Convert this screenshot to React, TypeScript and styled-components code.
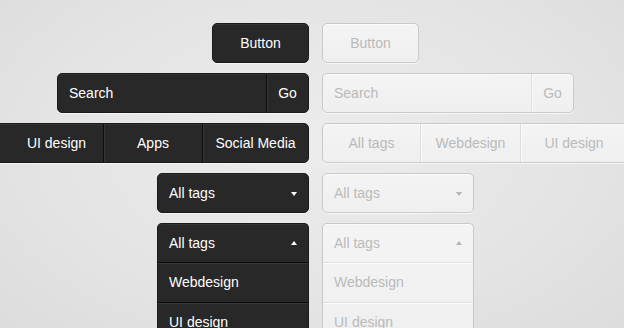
import React from "react";
import styled, { createGlobalStyle, css } from "styled-components";

type Tone = "dark" | "light";

const Global = createGlobalStyle`
  html, body { margin: 0; padding: 0; }
  body {
    width: 624px;
    height: 328px;
    overflow: hidden;
    background: radial-gradient(ellipse 70% 80% at 50% 45%, #ececec 0%, #e4e4e4 60%, #dcdcdc 100%);
    font-family: "Liberation Sans", Arial, sans-serif;
    font-size: 14px;
    -webkit-font-smoothing: antialiased;
  }
`;

const Page = styled.div`
  display: grid;
  row-gap: 10px;
  padding-top: 23px;
`;

const Row = styled.div`
  display: grid;
  grid-template-columns: 309px 1fr;
  column-gap: 13px;
  align-items: start;
`;

const Left = styled.div`
  display: flex;
  justify-content: flex-end;
  min-width: 0;
`;

const Right = styled.div`
  display: flex;
  justify-content: flex-start;
  min-width: 0;
`;

const surface = (tone: Tone) =>
  tone === "dark"
    ? css`
        background: #282828;
        border: 1px solid #1a1a1a;
        color: #ffffff;
        box-shadow: inset 0 1px 0 #333, 0 1px 0 rgba(255, 255, 255, 0.6);
      `
    : css`
        background: linear-gradient(#f4f4f4, #efefef);
        border: 1px solid #c9c9c9;
        color: #bababa;
        box-shadow: inset 0 1px 0 #fafafa, 0 1px 0 rgba(255, 255, 255, 0.7);
      `;

const divider = (tone: Tone) =>
  tone === "dark"
    ? css`
        border-left: 1px solid #0d0d0d;
        box-shadow: inset 1px 0 0 #363636;
      `
    : css`
        border-left: 1px solid #dddddd;
        box-shadow: inset 1px 0 0 #fbfbfb;
      `;

const Button = styled.div<{ $tone: Tone }>`
  ${(p) => surface(p.$tone)}
  box-sizing: border-box;
  width: 97px;
  height: 40px;
  border-radius: 5px;
  display: flex;
  align-items: center;
  justify-content: center;
`;

const SearchBox = styled.div<{ $tone: Tone }>`
  ${(p) => surface(p.$tone)}
  box-sizing: border-box;
  width: 252px;
  height: 40px;
  border-radius: 5px;
  display: flex;
  overflow: hidden;
`;

const SearchText = styled.div`
  flex: 1;
  display: flex;
  align-items: center;
  padding-left: 11px;
`;

const GoCell = styled.div<{ $tone: Tone }>`
  ${(p) => divider(p.$tone)}
  width: 42px;
  box-sizing: border-box;
  display: flex;
  align-items: center;
  justify-content: center;
`;

const Segmented = styled.div<{ $tone: Tone }>`
  ${(p) => surface(p.$tone)}
  box-sizing: border-box;
  height: 40px;
  border-radius: 5px;
  display: flex;
  flex-shrink: 0;
  overflow: hidden;
`;

const Segment = styled.div<{ $tone: Tone; $w: number; $pl?: number; $first?: boolean }>`
  ${(p) => (p.$first ? "" : divider(p.$tone))}
  box-sizing: border-box;
  width: ${(p) => p.$w}px;
  flex-shrink: 0;
  padding-left: ${(p) => p.$pl ?? 0}px;
  display: flex;
  align-items: center;
  justify-content: center;
  white-space: nowrap;
`;

const Select = styled.div<{ $tone: Tone; $open?: boolean }>`
  ${(p) => surface(p.$tone)}
  box-sizing: border-box;
  width: 152px;
  border-radius: ${(p) => (p.$open ? "5px 5px 0 0" : "5px")};
  ${(p) => (p.$open ? "border-bottom: none;" : "")}
  display: flex;
  flex-direction: column;
`;

const SelectHead = styled.div`
  height: 38px;
  display: flex;
  align-items: center;
  justify-content: space-between;
  padding: 0 11px 0 11px;
`;

const Caret = styled.span<{ $tone: Tone; $up?: boolean }>`
  width: 0;
  height: 0;
  border-left: 3.5px solid transparent;
  border-right: 3.5px solid transparent;
  ${(p) =>
    p.$up
      ? `border-bottom: 4px solid ${p.$tone === "dark" ? "#ffffff" : "#b5b5b5"};`
      : `border-top: 4px solid ${p.$tone === "dark" ? "#ffffff" : "#b5b5b5"};`}
  margin-top: ${(p) => (p.$up ? "-1px" : "1px")};
`;

const Option = styled.div<{ $tone: Tone }>`
  box-sizing: border-box;
  height: 40px;
  display: flex;
  align-items: center;
  padding: 0 0 2px 11px;
  ${(p) =>
    p.$tone === "dark"
      ? css`
          border-top: 1px solid #0b0b0b;
          box-shadow: inset 0 1px 0 #383838;
        `
      : css`
          border-top: 1px solid #e0e0e0;
          box-shadow: inset 0 1px 0 #fbfbfb;
        `}
`;

const darkTabs = [
  { label: "UI design", w: 124, pl: 31 },
  { label: "Apps", w: 99 },
  { label: "Social Media", w: 106 },
];

const lightTabs = [
  { label: "All tags", w: 97 },
  { label: "Webdesign", w: 100 },
  { label: "UI design", w: 107 },
];

const options = ["Webdesign", "UI design"];

function Tabs({ tone, list }: { tone: Tone; list: { label: string; w: number; pl?: number }[] }) {
  return (
    <Segmented $tone={tone}>
      {list.map((t, i) => (
        <Segment key={t.label} $tone={tone} $w={t.w} $pl={t.pl} $first={i === 0}>
          {t.label}
        </Segment>
      ))}
    </Segmented>
  );
}

function Search({ tone }: { tone: Tone }) {
  return (
    <SearchBox $tone={tone}>
      <SearchText>Search</SearchText>
      <GoCell $tone={tone}>Go</GoCell>
    </SearchBox>
  );
}

function Dropdown({ tone, open }: { tone: Tone; open?: boolean }) {
  return (
    <Select $tone={tone} $open={open}>
      <SelectHead>
        <span>All tags</span>
        <Caret $tone={tone} $up={open} />
      </SelectHead>
      {open &&
        options.map((o) => (
          <Option key={o} $tone={tone}>
            {o}
          </Option>
        ))}
    </Select>
  );
}

export default function App() {
  return (
    <>
      <Global />
      <Page>
        <Row>
          <Left>
            <Button $tone="dark">Button</Button>
          </Left>
          <Right>
            <Button $tone="light">Button</Button>
          </Right>
        </Row>
        <Row>
          <Left>
            <Search tone="dark" />
          </Left>
          <Right>
            <Search tone="light" />
          </Right>
        </Row>
        <Row>
          <Left>
            <Tabs tone="dark" list={darkTabs} />
          </Left>
          <Right>
            <Tabs tone="light" list={lightTabs} />
          </Right>
        </Row>
        <Row>
          <Left>
            <Dropdown tone="dark" />
          </Left>
          <Right>
            <Dropdown tone="light" />
          </Right>
        </Row>
        <Row>
          <Left>
            <Dropdown tone="dark" open />
          </Left>
          <Right>
            <Dropdown tone="light" open />
          </Right>
        </Row>
      </Page>
    </>
  );
}
